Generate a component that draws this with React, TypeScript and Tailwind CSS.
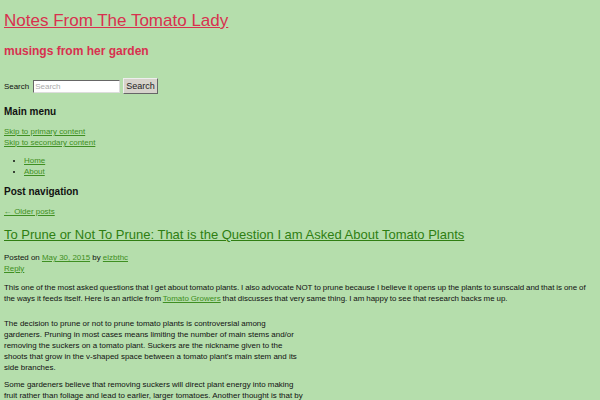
import React from 'react';

const link = 'text-[#3f8f22] underline';

export default function App() {
  return (
    <div className="h-screen w-full bg-[#b5deac] px-1 text-[7.94px] leading-[11px] text-[#111] overflow-hidden" style={{ fontFamily: '"Liberation Sans", Arial, sans-serif' }}>
      <header className="pt-[11px]">
        <h1 className="text-[17px] leading-[20px]">
          <a href="#" className="text-[#d8314f] underline">Notes From The Tomato Lady</a>
        </h1>
        <h2 className="mt-[12px] text-[12px] leading-[16px] font-bold text-[#d8314f]">musings from her garden</h2>
      </header>

      <form className="mt-[19px] flex items-center" onSubmit={e => e.preventDefault()}>
        <label className="mr-[4px]">Search</label>
        <input
          placeholder="Search"
          className="h-[13px] w-[87px] bg-white border border-t-[#666] border-l-[#666] border-b-[#ddd] border-r-[#ddd] px-[1px] text-[8px] placeholder:text-[#aaa] outline-none"
        />
        <button className="ml-[3px] h-[16px] px-[2px] bg-[#d6d3cb] text-[9px] text-[#222] border border-t-[#eee] border-l-[#eee] border-b-[#666] border-r-[#666]">
          Search
        </button>
      </form>

      <nav className="mt-[11px]">
        <h3 className="text-[10px] leading-[13px] font-bold">Main menu</h3>
        <div className="mt-[8px]">
          <a href="#" className={link}>Skip to primary content</a>
        </div>
        <div>
          <a href="#" className={link}>Skip to secondary content</a>
        </div>
        <ul className="mt-[7px] list-disc pl-[20px]">
          <li><a href="#" className={link}>Home</a></li>
          <li><a href="#" className={link}>About</a></li>
        </ul>
      </nav>

      <nav className="mt-[8px]">
        <h3 className="text-[10px] leading-[13px] font-bold">Post navigation</h3>
        <div className="mt-[8px]">
          <a href="#" className={link}>← Older posts</a>
        </div>
      </nav>

      <article className="mt-[10px]">
        <h1 className="text-[13px] leading-[16px]">
          <a href="#" className="text-[#2f7e12] underline">To Prune or Not To Prune: That is the Question I am Asked About Tomato Plants</a>
        </h1>
        <div className="mt-[9px]">
          Posted on <a href="#" className={link}>May 30, 2015</a> by <a href="#" className={link}>elzbthc</a>
        </div>
        <div>
          <a href="#" className={link}>Reply</a>
        </div>

        <p className="mt-[8px] [word-spacing:-0.3px]">
          This one of the most asked questions that I get about tomato plants. I also advocate NOT to prune because I believe it opens up the plants to sunscald and that is one of the ways it feeds itself. Here is an article from <a href="#" className={link}>Tomato Growers</a> that discusses that very same thing. I am happy to see that research backs me up.
        </p>

        <p className="mt-[14px] w-[300px]">
          The decision to prune or not to prune tomato plants is controversial among gardeners. Pruning in most cases means limiting the number of main stems and/or removing the suckers on a tomato plant. Suckers are the nickname given to the shoots that grow in the v-shaped space between a tomato plant’s main stem and its side branches.
        </p>

        <p className="mt-[6px] w-[300px]">
          Some gardeners believe that removing suckers will direct plant energy into making fruit rather than foliage and lead to earlier, larger tomatoes. Another thought is that by
        </p>
      </article>
    </div>
  );
}
